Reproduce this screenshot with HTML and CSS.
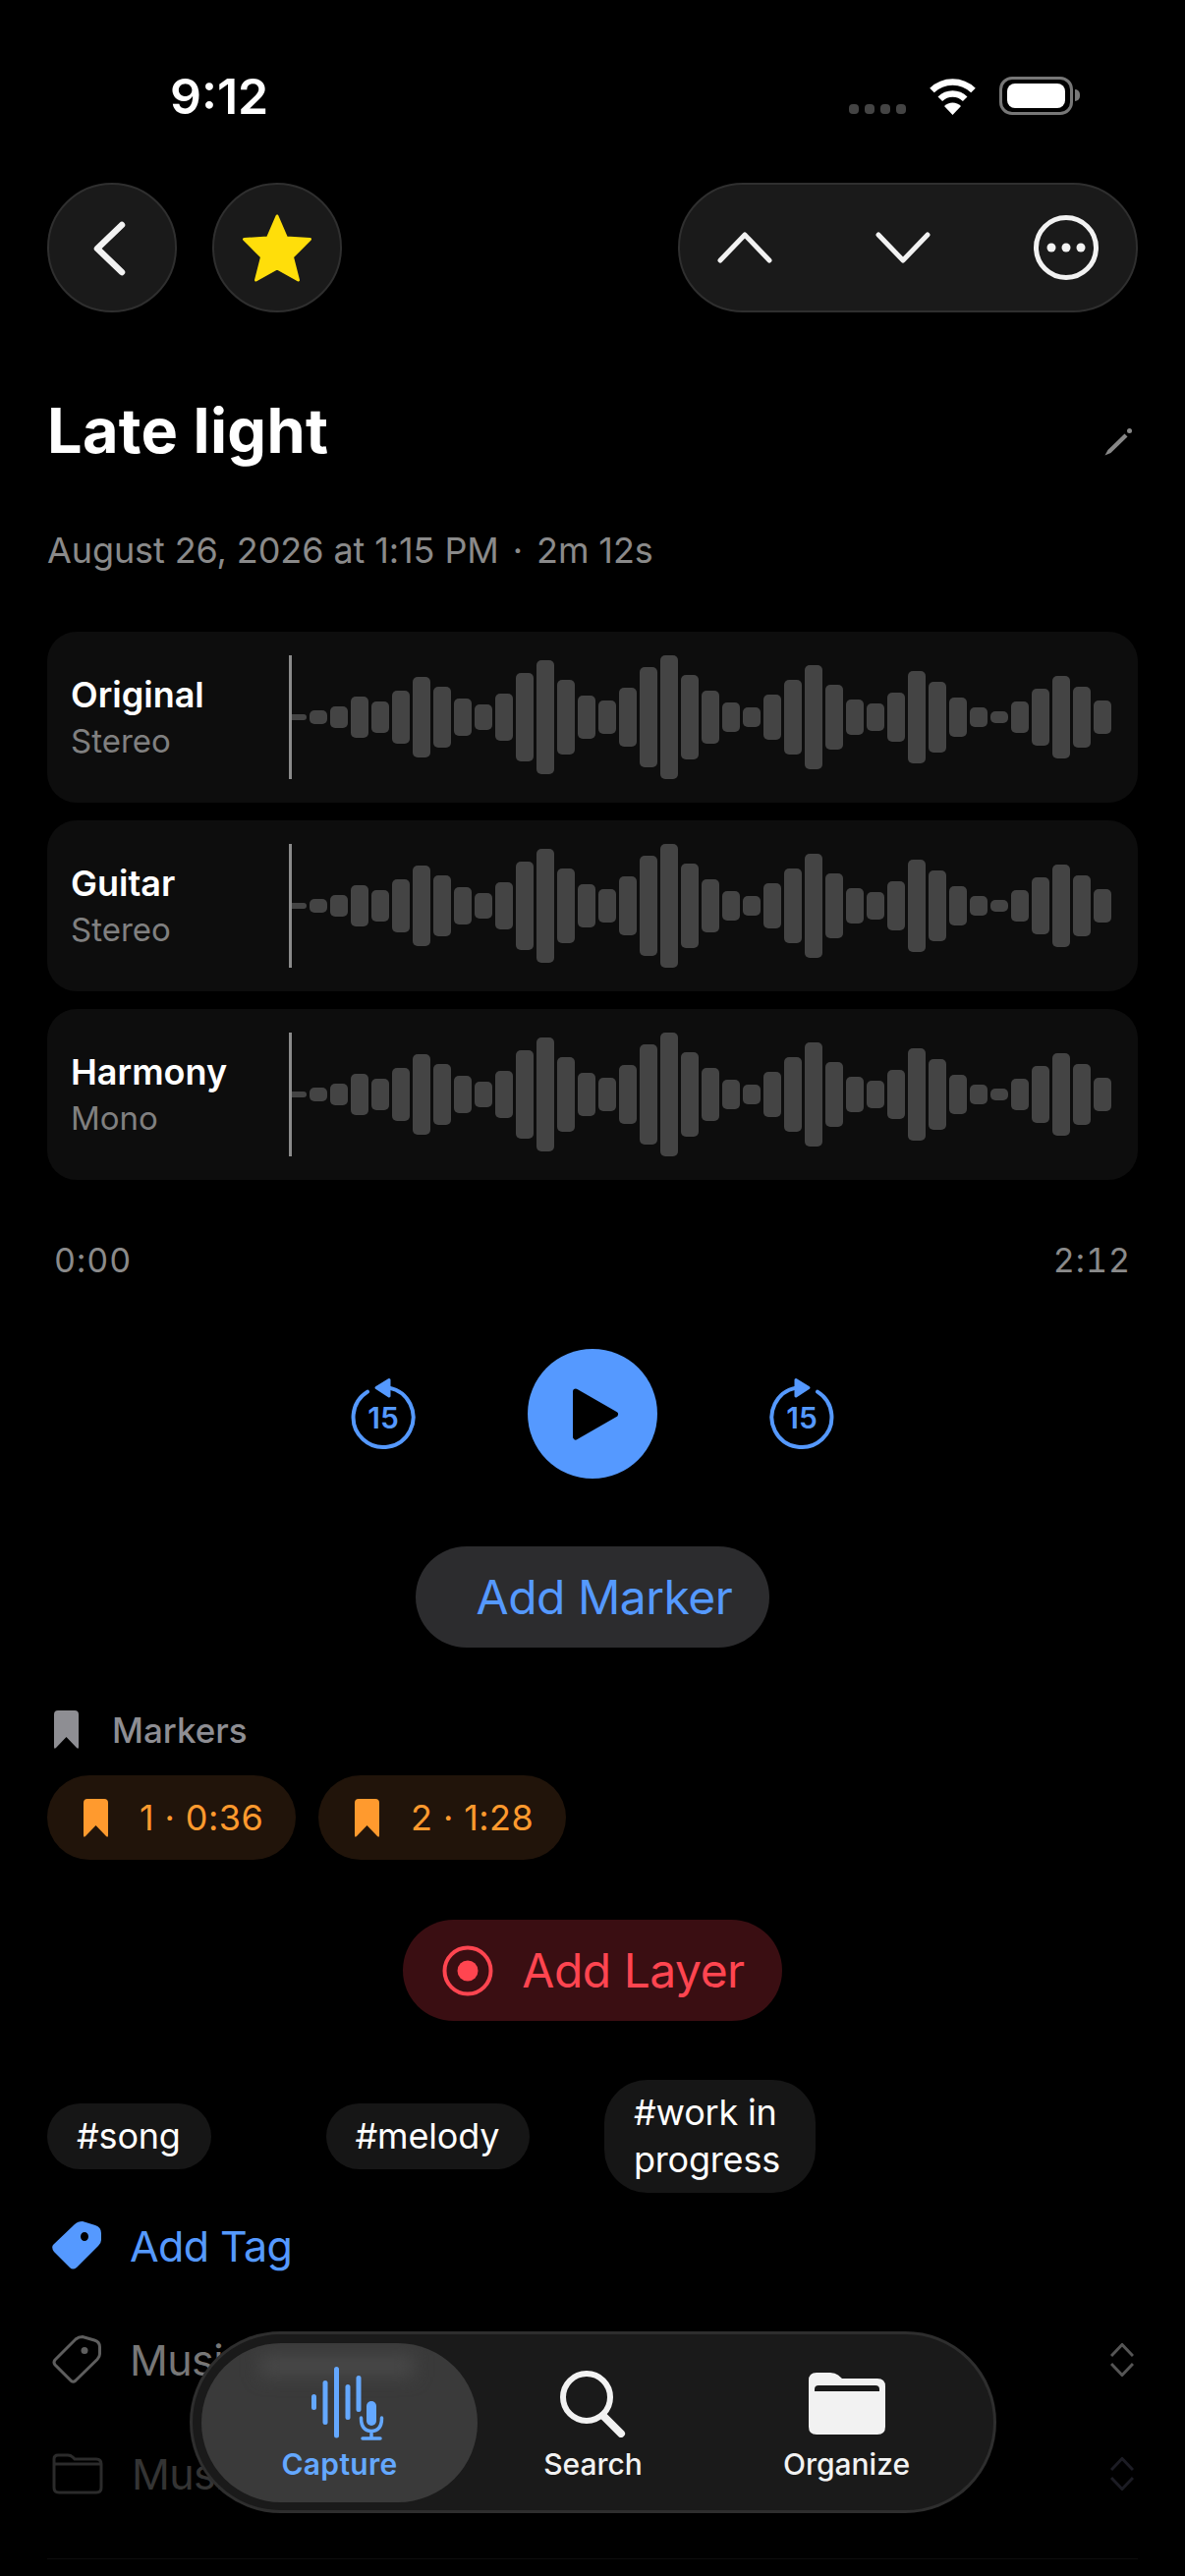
FILE: index.html
```html
<!DOCTYPE html>
<html lang="en">
  <head>
    <meta charset="UTF-8" />
    <meta name="viewport" content="width=device-width, initial-scale=1.0" />
    <title>Late light</title>
    <link rel="stylesheet" href="styles.css">
  </head>
  <body>
    <div class="status">
      <span class="clock">9:12</span>
      <div class="status-icons">
        <div class="signal"><i></i><i></i><i></i><i></i></div>
        <svg class="wifi" width="51" height="37" viewBox="0 0 51 37">
          <path d="M4.5 12A30 30 0 0 1 46.5 12" fill="none" stroke="#fff" stroke-width="6.5" />
          <path d="M12.8 20.7A18 18 0 0 1 38.2 20.7" fill="none" stroke="#fff" stroke-width="6.5" />
          <path d="M25.5 37L17 28A12 12 0 0 1 34 28Z" fill="#fff" />
        </svg>
        <div class="battery"><div class="battery-fill"></div></div>
      </div>
    </div>

    <main class="page">
      <div class="nav">
        <div class="nav-left">
          <button class="round-btn" type="button">
            <svg width="40" height="60" viewBox="0 0 40 60"><path d="M30 7L5 31L30 55" fill="none" stroke="#f2f2f2" stroke-width="6.5" stroke-linecap="round" stroke-linejoin="round" /></svg>
          </button>
          <button class="round-btn" type="button">
            <svg width="70" height="69" viewBox="0 0 70 69"><path d="M35 2L44.5 24L68.500 25.5L50.5 43.5L56.5 67L35 55L13.5 67L19.5 43.5L1.500 25.5L25.5 24Z" fill="#ffde0a" stroke="#ffde0a" stroke-width="3" stroke-linejoin="round" /></svg>
          </button>
        </div>
        <div class="nav-pill">
          <svg width="56" height="32" viewBox="0 0 56 32"><path d="M3 29L28 3L53 29" fill="none" stroke="#f2f2f2" stroke-width="5" stroke-linecap="round" stroke-linejoin="round" /></svg>
          <svg width="56" height="32" viewBox="0 0 56 32"><path d="M3 3L28 29L53 3" fill="none" stroke="#f2f2f2" stroke-width="5" stroke-linecap="round" stroke-linejoin="round" /></svg>
          <svg width="66" height="66" viewBox="0 0 66 66">
            <circle cx="33" cy="33" r="30.5" fill="none" stroke="#f2f2f2" stroke-width="5" />
            <circle cx="18" cy="33" r="4.5" fill="#f2f2f2" />
            <circle cx="33" cy="33" r="4.5" fill="#f2f2f2" />
            <circle cx="48" cy="33" r="4.5" fill="#f2f2f2" />
          </svg>
        </div>
      </div>

      <div class="title-row">
        <h1 class="title">Late light</h1>
        <svg class="pencil" width="32" height="30" viewBox="0 0 32 30">
          <path d="M3.500 28.500L6.500 23L23.500 6.500L26.500 9.500L9.500 26Z" fill="#888" />
          <circle cx="28.500" cy="3.500" r="2.500" fill="#888" />
        </svg>
      </div>

      <p class="date">August 26, 2026 at 1:15 PM <span class="date-dot">·</span> 2m 12s</p>

      <div class="tracks">
        <div class="track">
          <div class="track-label"><b>Original</b><span>Stereo</span></div>
          <div class="wave"></div>
        </div>
        <div class="track">
          <div class="track-label"><b>Guitar</b><span>Stereo</span></div>
          <div class="wave"></div>
        </div>
        <div class="track">
          <div class="track-label"><b>Harmony</b><span>Mono</span></div>
          <div class="wave"></div>
        </div>
      </div>

      <div class="times"><span>0:00</span><span>2:12</span></div>

      <div class="player">
        <svg width="70" height="76" viewBox="0 0 70 76">
          <path d="M41 11.600A30.500 30.500 0 1 1 19 15.600" fill="none" stroke="#5599ff" stroke-width="4" stroke-linecap="round" />
          <path d="M41 3.500L28 11.500L41 20Z" fill="#5599ff" stroke="#5599ff" stroke-width="3" stroke-linejoin="round" />
          <text class="skip-num" x="35" y="53" text-anchor="middle">15</text>
        </svg>
        <button class="play-btn" type="button">
          <svg width="50" height="57" viewBox="0 0 50 57"><path d="M4 5.500L44 28.500L4 51.500Z" fill="#000" stroke="#000" stroke-width="6" stroke-linejoin="round" /></svg>
        </button>
        <svg width="70" height="76" viewBox="0 0 70 76">
          <path d="M29 11.600A30.500 30.500 0 1 0 51 15.600" fill="none" stroke="#5599ff" stroke-width="4" stroke-linecap="round" />
          <path d="M29 3.500L42 11.500L29 20Z" fill="#5599ff" stroke="#5599ff" stroke-width="3" stroke-linejoin="round" />
          <text class="skip-num" x="35" y="53" text-anchor="middle">15</text>
        </svg>
      </div>

      <button class="action action-marker" type="button">Add Marker</button>

      <div class="markers-head">
        <svg width="25" height="39" viewBox="0 0 25 39"><path d="M4 0H21Q25 0 25 4V37Q25 40 23 38L12.500 27L2 38Q0 40 0 37V4Q0 0 4 0Z" fill="#8e8e93" /></svg>
        <span>Markers</span>
      </div>

      <div class="chips">
        <div class="chip">
          <svg width="25" height="39" viewBox="0 0 25 39"><path d="M4 0H21Q25 0 25 4V37Q25 40 23 38L12.500 27L2 38Q0 40 0 37V4Q0 0 4 0Z" fill="#ff9a2e" /></svg>
          <span>1 · 0:36</span>
        </div>
        <div class="chip">
          <svg width="25" height="39" viewBox="0 0 25 39"><path d="M4 0H21Q25 0 25 4V37Q25 40 23 38L12.500 27L2 38Q0 40 0 37V4Q0 0 4 0Z" fill="#ff9a2e" /></svg>
          <span>2 · 1:28</span>
        </div>
      </div>

      <button class="action action-layer" type="button">
        <svg width="52" height="52" viewBox="0 0 52 52">
          <circle cx="26" cy="26" r="23.500" fill="none" stroke="#ff4550" stroke-width="4" />
          <circle cx="26" cy="26" r="10.500" fill="#ff4550" />
        </svg>
        <span>Add Layer</span>
      </button>

      <div class="tags">
        <span class="tag">#song</span>
        <span class="tag">#melody</span>
        <span class="tag tag-wrapped">#work in<br />progress</span>
      </div>

      <div class="row row-add">
        <svg class="row-icon" width="50" height="50" viewBox="0 0 50 50">
          <path fill-rule="evenodd" d="M1 24L23 3Q26 0 31 0L44 4Q50 6 50 12V19Q50 22 47 25L25 47Q21 50 18 47L2 31Q-1 27 1 24ZM33 11A4 4.500 0 1 0 33 20A4 4.500 0 1 0 33 11Z" fill="#5599ff" />
        </svg>
        <span>Add Tag</span>
      </div>

      <div class="row row-music">
        <svg class="row-icon" width="50" height="50" viewBox="0 0 50 50">
          <path d="M3 25L24 4Q27 1.500 31 1.500L43 5Q48.500 6.500 48.500 12V19Q48.500 22 46 24.500L24 46Q21 48.500 19 46L3 30Q1 27.500 3 25Z" fill="none" stroke="#5e5e5e" stroke-width="3" />
          <circle cx="33" cy="15.500" r="3.500" fill="#5e5e5e" />
        </svg>
        <span>Music</span>
        <svg class="updown" width="24" height="34" viewBox="0 0 24 34"><path d="M1 13L12 1.500L23 13M1 21L12 32.500L23 21" fill="none" stroke="#555" stroke-width="3" /></svg>
      </div>

      <div class="row row-folder">
        <svg class="row-icon" width="52" height="42" viewBox="0 0 52 42">
          <path d="M6 2H16Q19 2 21 4L23 6H45Q50 6 50 11V35Q50 40 45 40H7Q2 40 2 35V6Q2 2 6 2ZM2 11H50" fill="none" stroke="#2b2b2b" stroke-width="3" />
        </svg>
        <span>Music</span>
        <svg class="updown" width="24" height="34" viewBox="0 0 24 34"><path d="M1 13L12 1.500L23 13M1 21L12 32.500L23 21" fill="none" stroke="#1c1c24" stroke-width="3" /></svg>
      </div>

      <div class="divider"></div>
    </main>

    <nav class="tabbar">
      <div class="tab tab-active">
        <div class="tab-glass"><div class="tab-glow"></div></div>
        <div class="tab-icon">
          <svg class="capture-icon" width="76" height="76" viewBox="0 0 76 76">
            <g fill="none" stroke="#64a8ff" stroke-width="5" stroke-linecap="round">
              <path d="M3.500 30.500V41.500" />
              <path d="M15 16.500V56.500" />
              <path d="M26.500 2.500V70" />
              <path d="M38 20.500V51.500" />
              <path d="M49 11.500V43.500" />
            </g>
            <rect x="57" y="35" width="10" height="25" rx="5" fill="#64a8ff" />
            <path d="M51.500 52Q51.500 65.500 62 65.500Q72.500 65.500 72.500 52M62 65.500V72M53 73H71" fill="none" stroke="#64a8ff" stroke-width="3.500" stroke-linecap="round" />
          </svg>
        </div>
        <span class="tab-label">Capture</span>
      </div>
      <div class="tab">
        <div class="tab-icon">
          <svg width="67" height="68" viewBox="0 0 67 68">
            <circle cx="27" cy="27" r="24" fill="none" stroke="#f2f2f2" stroke-width="6" />
            <path d="M44 46L62 64" fill="none" stroke="#f2f2f2" stroke-width="8" stroke-linecap="round" />
          </svg>
        </div>
        <span class="tab-label">Search</span>
      </div>
      <div class="tab">
        <div class="tab-icon">
          <svg width="78" height="63" viewBox="0 0 78 63">
            <path d="M8 0H22Q27 0 30 2.500L34 6H70Q78 6 78 14V55Q78 63 70 63H8Q0 63 0 55V8Q0 0 8 0Z" fill="#f2f2f2" />
            <path d="M6 19V17Q6 13 10 13H68Q72 13 72 17V19Z" fill="#1a1a1a" />
          </svg>
        </div>
        <span class="tab-label">Organize</span>
      </div>
    </nav>

    <script src="script.js"></script>
  </body>
</html>
```

FILE: styles.css
```css
* {
  box-sizing: border-box;
}
body {
  position: relative;
  width: 1206px;
  height: 2622px;
  margin: 0;
  overflow: hidden;
  background-color: #000;
  color: #fff;
  font-family: Inter, "Noto Sans", sans-serif;
}
button {
  border: none;
  padding: 0;
  font-family: inherit;
  cursor: pointer;
}
svg {
  display: block;
  flex-shrink: 0;
}

/* status bar */
.status {
  display: flex;
  justify-content: space-between;
  height: 186px;
  padding: 74px 114px 0 173px;
}
.clock {
  font-size: 50px;
  font-weight: 600;
  line-height: 48px;
}
.status-icons {
  display: flex;
  align-items: flex-end;
  height: 43px;
}
.signal {
  display: flex;
  gap: 6px;
  margin: 0 22px 1px 0;
}
.signal i {
  display: block;
  width: 10px;
  height: 10px;
  border-radius: 4px;
  background-color: #444;
}
.wifi {
  margin-right: 22px;
}
.battery {
  position: relative;
  width: 75px;
  height: 39px;
  padding: 4px 5px;
  border: 3px solid #777;
  border-radius: 13px;
}
.battery::after {
  content: "";
  position: absolute;
  top: 10px;
  right: -10px;
  width: 5px;
  height: 12px;
  border-radius: 0 5px 5px 0;
  background-color: #777;
}
.battery-fill {
  height: 100%;
  border-radius: 8px;
  background-color: #fff;
}

.page {
  padding: 0 48px;
}

/* top buttons */
.nav {
  display: flex;
  justify-content: space-between;
  height: 132px;
}
.nav-left {
  display: flex;
  gap: 36px;
}
.round-btn {
  display: flex;
  align-items: center;
  justify-content: center;
  width: 132px;
  height: 132px;
  border: 2px solid #2f2f2f;
  border-radius: 50%;
  background-color: #1a1a1a;
}
.nav-pill {
  display: flex;
  align-items: center;
  gap: 105px;
  width: 468px;
  height: 132px;
  padding: 0 0 0 38px;
  border: 2px solid #2f2f2f;
  border-radius: 66px;
  background-color: #1a1a1a;
}

/* title */
.title-row {
  display: flex;
  align-items: center;
  justify-content: space-between;
  height: 76px;
  margin-top: 82px;
}
.title {
  margin: 0;
  font-size: 63px;
  font-weight: 700;
  line-height: 76px;
  letter-spacing: 0.3px;
}
.pencil {
  margin: 24px 5px 0 0;
}
.date {
  margin: 60px 0 0;
  color: #8a8a8a;
  font-size: 36px;
  line-height: 48px;
  letter-spacing: -0.1px;
}
.date-dot {
  margin: 0 4px;
}

/* tracks */
.tracks {
  display: flex;
  flex-direction: column;
  gap: 18px;
  margin-top: 59px;
}
.track {
  display: flex;
  align-items: center;
  height: 174px;
  padding-left: 24px;
  border-radius: 30px;
  background-color: #0d0d0d;
}
.track-label {
  display: flex;
  flex-direction: column;
  width: 222px;
  line-height: 46px;
}
.track-label b {
  font-size: 36px;
  font-weight: 600;
}
.track-label span {
  margin-top: 1px;
  color: #808080;
  font-size: 33px;
}
.wave {
  position: relative;
  display: flex;
  align-items: center;
  gap: 3px;
  height: 126px;
}
.wave i {
  display: block;
  width: 18px;
  border-radius: 5px;
  background-color: #444;
}
.wave::before {
  content: "";
  position: absolute;
  top: 0;
  bottom: 0;
  left: 0;
  width: 3px;
  background-color: #8a8a8a;
}

.times {
  display: flex;
  justify-content: space-between;
  margin-top: 60px;
  padding: 0 7px;
  color: #8a8a8a;
  font-size: 34px;
  font-variant-numeric: tabular-nums;
  line-height: 44px;
  letter-spacing: 1px;
}

/* player */
.player {
  display: flex;
  align-items: center;
  justify-content: center;
  gap: 112px;
  margin-top: 68px;
}
.play-btn {
  display: flex;
  align-items: center;
  justify-content: center;
  width: 132px;
  height: 132px;
  padding-left: 8px;
  border-radius: 50%;
  background-color: #5599ff;
}
.skip-num {
  fill: #5599ff;
  font-family: Inter, sans-serif;
  font-size: 30px;
  font-weight: 600;
}

/* large pill buttons */
.action {
  display: flex;
  align-items: center;
  width: fit-content;
  height: 103px;
  border-radius: 52px;
  font-size: 48px;
  letter-spacing: -0.5px;
}
.action-marker {
  margin: 69px auto 0;
  padding: 0 38px 0 62px;
  background-color: #2c2c2e;
  color: #5599ff;
}
.action-layer {
  gap: 29px;
  margin: 61px auto 0;
  padding: 0 38px 0 40px;
  background-color: #3a0e12;
  color: #ff4550;
}

/* markers */
.markers-head {
  display: flex;
  align-items: center;
  gap: 34px;
  height: 39px;
  margin: 64px 0 0 7px;
  color: #8e8e93;
  font-size: 35px;
  font-weight: 500;
}
.chips {
  display: flex;
  gap: 23px;
  margin-top: 27px;
}
.chip {
  display: flex;
  align-items: center;
  gap: 32px;
  height: 86px;
  padding: 0 33px 0 37px;
  border-radius: 43px;
  background-color: #21140a;
  color: #ff9a2e;
  font-size: 36px;
  letter-spacing: 0.4px;
}

/* tags */
.tags {
  display: grid;
  grid-template-columns: repeat(4, 1fr);
  gap: 24px;
  align-items: center;
  justify-items: start;
  margin-top: 60px;
}
.tag {
  padding: 9px 31px 10px 30px;
  border-radius: 44px;
  background-color: #161616;
  font-size: 36px;
  line-height: 48px;
  letter-spacing: -0.2px;
}
.tag-wrapped {
  padding-right: 36px;
}

/* rows under the tags */
.row {
  display: flex;
  align-items: center;
  height: 50px;
  margin-top: 66px;
  padding-left: 5px;
  font-size: 43px;
  letter-spacing: -0.6px;
}
.row-icon {
  margin-right: 29px;
}
.row-add {
  margin-top: 29px;
  color: #5599ff;
}
.row-music {
  color: #777;
}
.row-folder {
  color: #343434;
}
.updown {
  margin: 0 4px 0 auto;
}
.divider {
  height: 1px;
  margin-top: 61px;
  background-color: #0d0d0d;
}

/* floating tab bar */
.tabbar {
  position: absolute;
  left: 193px;
  bottom: 64px;
  display: flex;
  align-items: center;
  justify-content: center;
  width: 821px;
  height: 185px;
  border: 3px solid #2e2e2e;
  border-radius: 93px;
  background-color: #1a1a1a;
}
.tab {
  position: relative;
  display: flex;
  flex-direction: column;
  align-items: center;
  width: 258px;
  height: 162px;
  padding-top: 24px;
}
.tab-glass {
  position: absolute;
  top: 0;
  left: -12px;
  right: -11px;
  bottom: 0;
  overflow: hidden;
  border-radius: 81px;
  background-color: #3a3a3a;
}
.tab-glow {
  position: absolute;
  top: 12px;
  left: 60px;
  width: 156px;
  height: 22px;
  background-color: #484848;
  filter: blur(9px);
}
.tab-icon {
  position: relative;
  display: flex;
  align-items: center;
  justify-content: center;
  height: 76px;
}
.capture-icon {
  margin-left: 16px;
}
.tab-label {
  position: relative;
  margin-top: 5px;
  color: #f2f2f2;
  font-size: 30px;
  font-weight: 500;
  line-height: 36px;
}
.tab-active .tab-label {
  color: #64a8ff;
  font-weight: 600;
  letter-spacing: 0.3px;
}
```

FILE: script.js
```js
// same waveform in every track
var heights = [
  6, 14, 22, 42, 32, 54, 82, 62, 38, 26, 48, 90, 116, 76, 44, 34, 60, 102, 126, 86,
  54, 30, 20, 46, 76, 106, 66, 36, 28, 50, 94, 72, 40, 20, 12, 32, 58, 84, 62, 34,
];

document.querySelectorAll(".wave").forEach(function (wave) {
  heights.forEach(function (h) {
    var bar = document.createElement("i");
    bar.style.height = h + "px";
    wave.appendChild(bar);
  });
});
```
